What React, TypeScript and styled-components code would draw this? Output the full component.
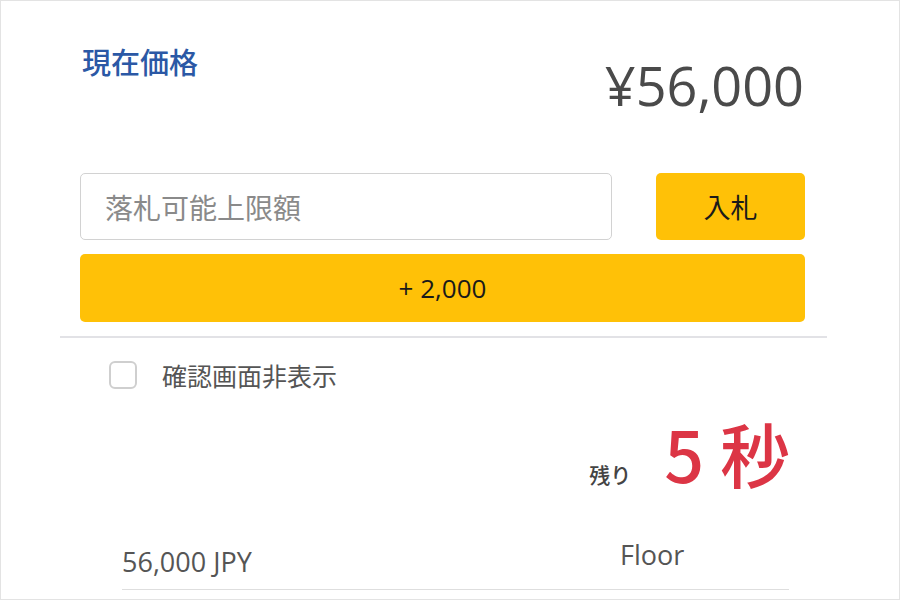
import React from 'react';
import styled, { createGlobalStyle } from 'styled-components';

const GlobalStyle = createGlobalStyle`
  body {
    margin: 0;
    background: #ffffff;
    font-family: 'Open Sans', 'Noto Sans CJK JP', sans-serif;
  }
`;

const cjk = `'Noto Sans CJK JP', sans-serif`;
const latin = `'Open Sans', 'Noto Sans CJK JP', sans-serif`;

const Panel = styled.div`
  box-sizing: border-box;
  width: 900px;
  height: 600px;
  border: 1px solid #e3e3e3;
  overflow: hidden;
`;

const Content = styled.div`
  width: 725px;
  margin-left: 79px;
`;

const Header = styled.div`
  display: flex;
  justify-content: space-between;
  align-items: flex-start;
  padding-top: 46px;
`;

const Title = styled.h2`
  margin: 0 0 0 2px;
  font-family: ${cjk};
  font-size: 29px;
  line-height: 1;
  font-weight: 500;
  color: #2b58a5;
`;

const Price = styled.div`
  margin-top: 11px;
  margin-right: 1px;
  font-family: ${latin};
  font-size: 54px;
  line-height: 1;
  color: #4a4a4a;
`;

const BidRow = styled.div`
  display: flex;
  gap: 44px;
  margin-top: 61px;
`;

const Input = styled.input`
  box-sizing: border-box;
  flex: 1;
  height: 67px;
  border: 1px solid #d2d2d2;
  border-radius: 5px;
  padding: 0 24px;
  font-family: ${cjk};
  font-size: 28px;
  color: #333;
  outline: none;
  &::placeholder {
    color: #8a8a8a;
  }
`;

const YellowButton = styled.button<{ $wide?: boolean }>`
  box-sizing: border-box;
  width: ${p => (p.$wide ? '100%' : '149px')};
  height: ${p => (p.$wide ? '68px' : '67px')};
  margin-top: ${p => (p.$wide ? '14px' : '0')};
  border: none;
  border-radius: 5px;
  background: #ffc107;
  color: #1a1a1a;
  font-family: ${p => (p.$wide ? latin : cjk)};
  font-size: ${p => (p.$wide ? '26px' : '27px')};
  cursor: pointer;
`;

const Divider = styled.hr`
  width: 767px;
  height: 2px;
  margin: 14px 0 0 -20px;
  border: none;
  background: #e2e2e6;
`;

const CheckRow = styled.label`
  display: flex;
  align-items: center;
  gap: 25px;
  margin: 19px 0 0 29px;
  font-family: ${cjk};
  font-size: 25px;
  color: #555;
`;

const CheckBox = styled.span`
  box-sizing: border-box;
  width: 28px;
  height: 28px;
  border: 2px solid #cfcfcf;
  border-radius: 6px;
`;

const Countdown = styled.div`
  display: flex;
  justify-content: flex-end;
  align-items: flex-end;
  gap: 33px;
  margin-top: 25px;
  padding-right: 15px;
`;

const RemainLabel = styled.span`
  margin-bottom: 3px;
  font-family: ${cjk};
  font-size: 21px;
  line-height: 1;
  font-weight: 500;
  color: #444;
`;

const Seconds = styled.span`
  font-family: ${cjk};
  font-size: 70px;
  line-height: 1;
  font-weight: 500;
  color: #dc3545;
`;

const InfoRow = styled.div`
  display: grid;
  grid-template-columns: 498px 1fr;
  align-items: start;
  width: 667px;
  margin: 53px 0 0 42px;
  padding-bottom: 14px;
  border-bottom: 1px solid #dedede;
  font-family: ${latin};
  font-size: 27px;
  line-height: 1;
  color: #555;
`;

const InfoCell = styled.span<{ $lift?: number }>`
  margin-top: ${p => p.$lift ?? 0}px;
`;

export default function App() {
  return (
    <>
      <GlobalStyle />
      <Panel>
        <Content>
          <Header>
            <Title>現在価格</Title>
            <Price>¥56,000</Price>
          </Header>
          <BidRow>
            <Input placeholder="落札可能上限額" />
            <YellowButton>入札</YellowButton>
          </BidRow>
          <YellowButton $wide>+ 2,000</YellowButton>
          <Divider />
          <CheckRow>
            <CheckBox />
            確認画面非表示
          </CheckRow>
          <Countdown>
            <RemainLabel>残り</RemainLabel>
            <Seconds>5 秒</Seconds>
          </Countdown>
          <InfoRow>
            <InfoCell $lift={7}>56,000 JPY</InfoCell>
            <InfoCell>Floor</InfoCell>
          </InfoRow>
        </Content>
      </Panel>
    </>
  );
}
